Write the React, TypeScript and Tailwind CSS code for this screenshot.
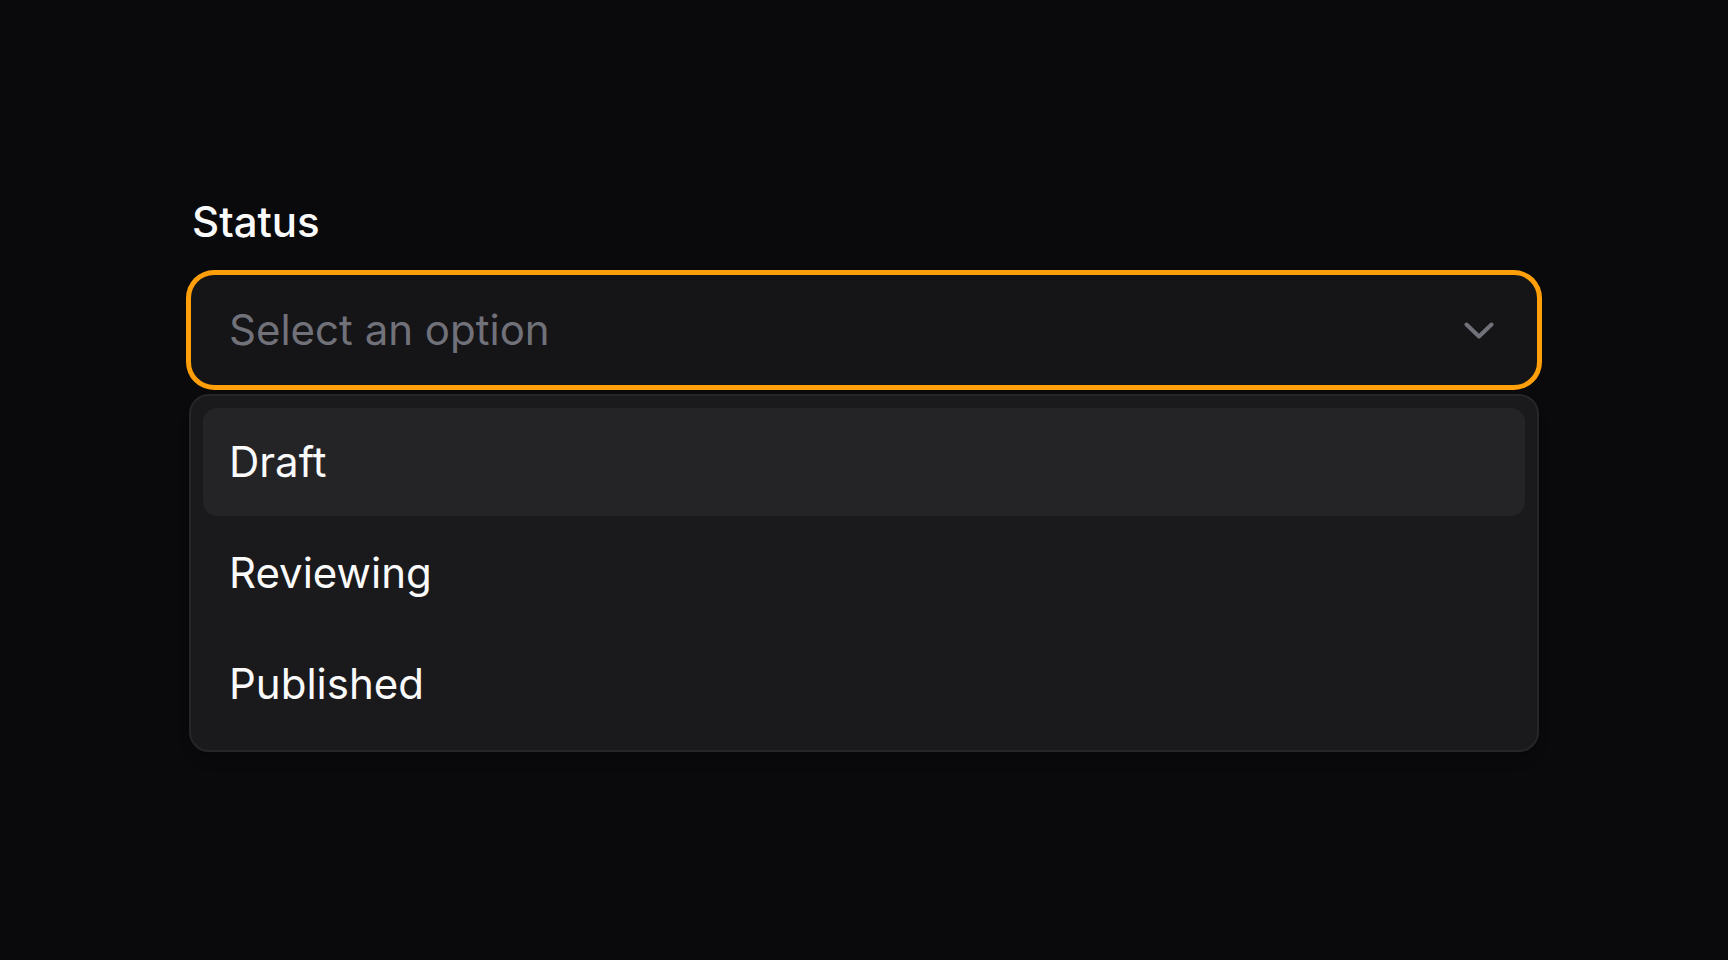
import React from "react";

export default function App() {
  const items = ["Draft", "Reviewing", "Published"];
  return (
    <div
      className="min-h-screen w-full bg-[#0a0a0c] flex justify-center"
      style={{ fontFamily: "Inter, 'Noto Sans', sans-serif" }}
    >
      <div className="w-[1350px] pt-[201px] flex flex-col">
        <div className="text-[42px] leading-[42px] font-medium text-[#fafafa] pl-[3px]">
          Status
        </div>
        <div className="mt-[30px] h-[114px] rounded-[25px] border-2 border-[#ff9f0a] ring-[3px] ring-[#ff9f0a] bg-[#151518] flex items-center justify-between pl-[38px] pr-[43px]">
          <span className="text-[42px] leading-[42px] text-[#71717a]">Select an option</span>
          <svg width="30" height="17" viewBox="0 0 30 17" fill="none">
            <path
              d="M2.5 2.5 L15 14.5 L27.5 2.5"
              stroke="#71717a"
              strokeWidth="4"
              strokeLinecap="round"
              strokeLinejoin="round"
            />
          </svg>
        </div>
        <div className="mt-[7px] rounded-[20px] border-2 border-[#26262a] bg-[#1a1a1d] p-3 flex flex-col gap-[3px] shadow-lg">
          {items.map((it, i) => (
            <div
              key={it}
              className={
                i === 0
                  ? "h-[108px] rounded-[14px] bg-[#242427] flex items-center pl-[26px] text-[42px] leading-[42px] text-[#fafafa]"
                  : "h-[108px] rounded-[14px] flex items-center pl-[26px] text-[42px] leading-[42px] text-[#fafafa]"
              }
            >
              {it}
            </div>
          ))}
        </div>
      </div>
    </div>
  );
}
